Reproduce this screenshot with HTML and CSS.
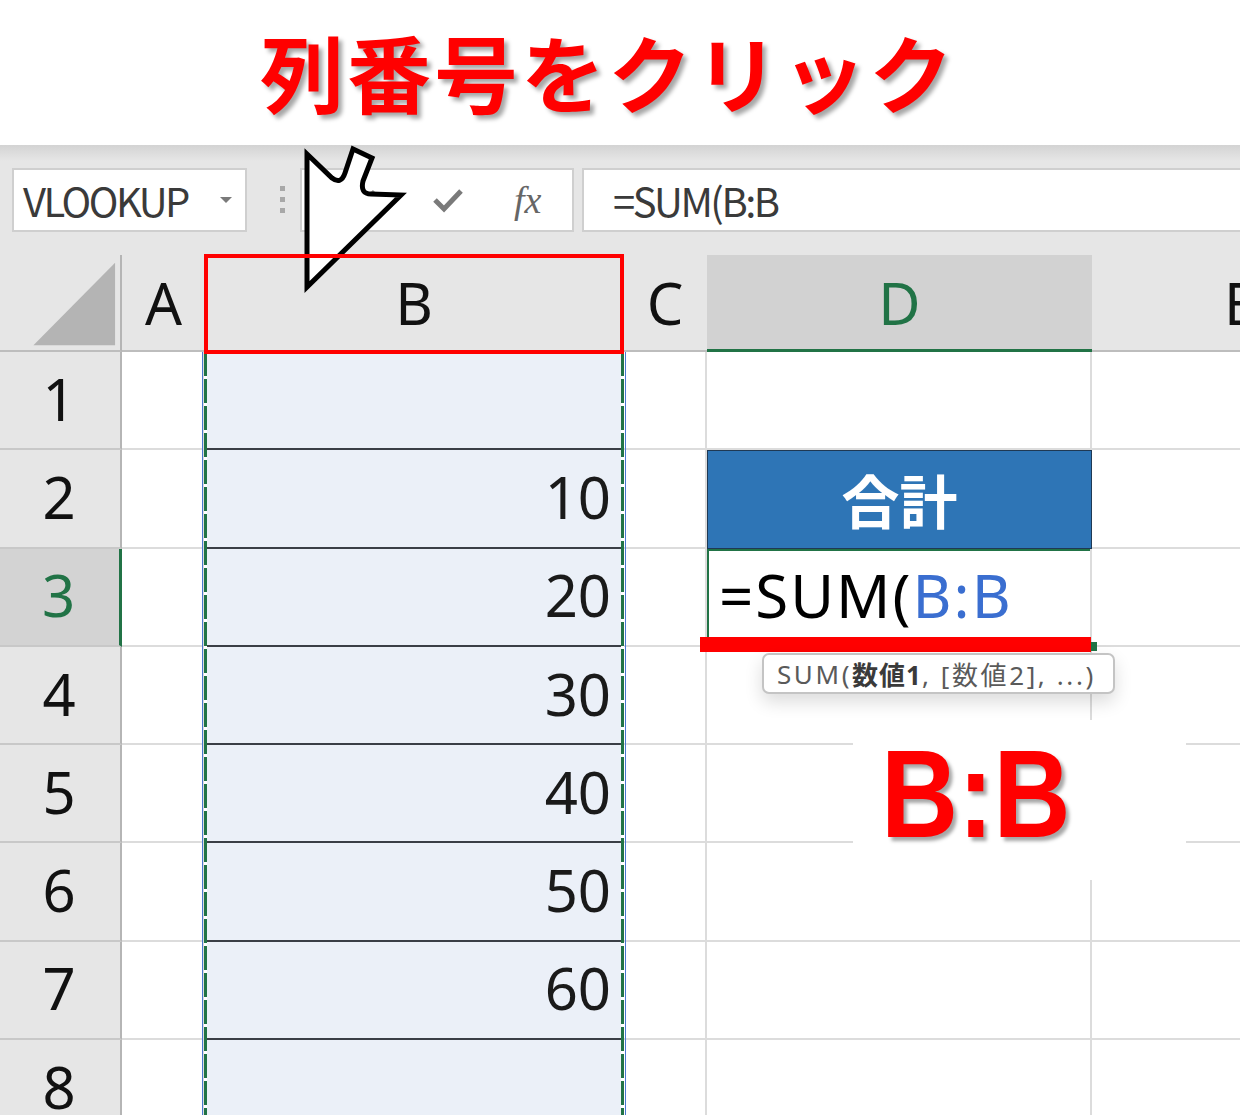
FILE: index.html
```html
<!DOCTYPE html>
<html lang="ja">
<head>
    <meta charset="UTF-8">
    <title>列番号をクリック</title>
    <link rel="stylesheet" href="styles.css">
</head>
<body>
<div class="page">
    <div class="title">列番号をクリック</div>

    <div class="toolbar">
        <div class="namebox">
            <span class="name">VLOOKUP</span>
            <span class="caret"></span>
        </div>
        <div class="grip"><i></i><i></i><i></i></div>
        <div class="fxbuttons">
            <svg class="cancel" width="26" height="26" viewBox="0 0 26 26"><path d="M4 4 L22 22 M22 4 L4 22" stroke="#8a8a8a" stroke-width="3" fill="none"/></svg>
            <svg class="check" width="32" height="26" viewBox="0 0 32 26"><path d="M3 13 L12 22 L29 4" stroke="#7a7a7a" stroke-width="5" fill="none"/></svg>
            <span class="fx">fx</span>
        </div>
        <div class="formula">=SUM(B:B</div>
    </div>

    <div class="grid">
        <div class="corner"><svg width="122" height="97" viewBox="0 0 122 97"><polygon points="34,92 117,8 117,92" fill="#b4b4b4"/></svg></div>
        <div class="ch">A</div>
        <div class="ch">B</div>
        <div class="ch">C</div>
        <div class="ch sel">D</div>
        <div class="ch">E</div>

        <div class="rh">1</div>
        <div class="c"></div>
        <div class="c b"></div>
        <div class="c"></div>
        <div class="c"></div>
        <div class="c"></div>

        <div class="rh">2</div>
        <div class="c"></div>
        <div class="c b">10</div>
        <div class="c"></div>
        <div class="c head">合計</div>
        <div class="c"></div>

        <div class="rh sel">3</div>
        <div class="c"></div>
        <div class="c b">20</div>
        <div class="c"></div>
        <div class="c active">=SUM(<span class="ref">B:B</span></div>
        <div class="c"></div>

        <div class="rh">4</div>
        <div class="c"></div>
        <div class="c b">30</div>
        <div class="c"></div>
        <div class="c"></div>
        <div class="c"></div>

        <div class="rh">5</div>
        <div class="c"></div>
        <div class="c b">40</div>
        <div class="c"></div>
        <div class="c"></div>
        <div class="c"></div>

        <div class="rh">6</div>
        <div class="c"></div>
        <div class="c b">50</div>
        <div class="c"></div>
        <div class="c"></div>
        <div class="c"></div>

        <div class="rh">7</div>
        <div class="c"></div>
        <div class="c b">60</div>
        <div class="c"></div>
        <div class="c"></div>
        <div class="c"></div>

        <div class="rh">8</div>
        <div class="c"></div>
        <div class="c b last"></div>
        <div class="c"></div>
        <div class="c"></div>
        <div class="c"></div>
    </div>

    <!-- things drawn over the sheet -->
    <div class="marquee"></div>
    <svg class="cursor" width="130" height="160" viewBox="0 0 130 160">
        <path d="M17 14 L42 38 Q51 45 55 33 L63 9 L82 18 L73 41 Q70 54 81 54 L111 55 L17 147 Z" fill="#fff" stroke="#000" stroke-width="5" stroke-linejoin="miter"/>
    </svg>
    <div class="redframe"></div>
    <div class="handle"></div>
    <div class="underline"></div>
    <div class="tooltip">SUM(<b>数値1</b>, [数値2], ...)</div>
    <div class="label"><span>B:B</span></div>
</div>
</body>
</html>
```

FILE: styles.css
```css
* {
    margin: 0;
    padding: 0;
    box-sizing: border-box;
}

body {
    width: 1240px;
    height: 1115px;
    overflow: hidden;
    background: #fff;
    font-family: 'Noto Sans', 'Noto Sans CJK JP', sans-serif;
    color: #1a1a1a;
}

.page {
    position: relative;
    width: 1240px;
    height: 1115px;
    overflow: hidden;
}

.title {
    height: 145px;
    display: flex;
    align-items: center;
    justify-content: center;
    padding-right: 24px;
    padding-bottom: 4px;
    font-family: 'Noto Sans CJK JP', sans-serif;
    font-weight: 700;
    font-size: 84px;
    letter-spacing: 3px;
    color: #ff0000;
    text-shadow: 4px 4px 4px rgba(0, 0, 0, 0.35);
}

/* formula bar */

.toolbar {
    height: 110px;
    display: flex;
    align-items: flex-start;
    padding: 23px 0 0 12px;
    background: linear-gradient(#d3d3d3, #e6e6e6 16px);
}

.namebox {
    width: 235px;
    height: 64px;
    background: #fff;
    border: 2px solid #cfcfcf;
    display: flex;
    align-items: center;
    justify-content: space-between;
    padding: 0 13px 0 9px;
}

.name,
.formula {
    font-family: 'Noto Sans CJK JP', sans-serif;
    font-size: 40px;
    letter-spacing: -2.5px;
    color: #3a3a3a;
}

.caret {
    width: 0;
    height: 0;
    border-left: 6px solid transparent;
    border-right: 6px solid transparent;
    border-top: 6px solid #7a7a7a;
}

.grip {
    display: flex;
    flex-direction: column;
    gap: 6px;
    margin: 18px 0 0 33px;
}

.grip i {
    display: block;
    width: 5px;
    height: 5px;
    background: #a8a8a8;
}

.fxbuttons {
    width: 274px;
    height: 64px;
    margin-left: 15px;
    background: #fff;
    border: 2px solid #cfcfcf;
    display: flex;
    align-items: center;
    padding-left: 50px;
}

.check {
    margin-left: 54px;
}

.fx {
    margin-left: 50px;
    font-family: 'Liberation Serif', serif;
    font-style: italic;
    font-size: 38px;
    color: #666;
}

.formula {
    flex: 1;
    height: 64px;
    margin-left: 8px;
    margin-right: -10px;
    background: #fff;
    border: 2px solid #cfcfcf;
    display: flex;
    align-items: center;
    padding-left: 29px;
}

/* sheet */

.grid {
    display: grid;
    grid-template-columns: 122px 83px 418px 84px 385px 296px;
    grid-template-rows: 97px repeat(8, 98.3px);
    width: 1388px;
}

.corner,
.ch,
.rh {
    background: #e6e6e6;
    display: flex;
    align-items: center;
    justify-content: center;
    font-size: 58px;
    color: #111;
}

.corner {
    border-right: 2px solid #b5b5b5;
    border-bottom: 2px solid #bdbdbd;
}

.ch {
    border-bottom: 2px solid #bdbdbd;
}

.ch.sel {
    background: #d2d2d2;
    color: #217346;
    border-bottom: 3px solid #217346;
}

.rh {
    border-right: 2px solid #b5b5b5;
    border-bottom: 2px solid #c8c8c8;
    padding: 0 2px 4px 0;
}

.rh.sel {
    background: #d3d3d3;
    color: #217346;
    border-right: 3px solid #217346;
}

.c {
    background: #fff;
    border-right: 2px solid #dcdcdc;
    border-bottom: 2px solid #dcdcdc;
    display: flex;
    align-items: center;
    font-size: 58px;
}

.c.b {
    background: #ebf0f8;
    justify-content: flex-end;
    padding: 0 12px 4px 0;
    border-right: none;
    border-bottom: 2px solid #3a3e46;
}

.c.b.last {
    border-bottom: none;
}

.c.head {
    background: #2e75b6;
    border: 1px solid #1f3954;
    justify-content: center;
    font-family: 'Noto Sans CJK JP', sans-serif;
    font-weight: 700;
    font-size: 58px;
    color: #fff;
}

.c.active {
    box-shadow: inset 2px 2px 0 #217346;
    padding: 0 0 4px 12px;
    font-size: 60px;
    letter-spacing: 2px;
    color: #000;
}

.ref {
    color: #3a6ed0;
}

/* overlays */

.marquee {
    position: absolute;
    left: 202px;
    top: 352px;
    width: 424px;
    height: 770px;
    border-left: 1px solid #4a78d0;
    border-right: 1px solid #4a78d0;
    background:
        repeating-linear-gradient(#217346 0 24px, #fff 24px 27px) left 1px top 0 / 3px 100% no-repeat,
        repeating-linear-gradient(#217346 0 24px, #fff 24px 27px) right 1px top 0 / 3px 100% no-repeat;
}

.cursor {
    position: absolute;
    left: 290px;
    top: 140px;
}

.redframe {
    position: absolute;
    left: 204px;
    top: 254px;
    width: 420px;
    height: 100px;
    border: 4px solid #ff0000;
}

.handle {
    position: absolute;
    left: 1089px;
    top: 642px;
    width: 8px;
    height: 9px;
    background: #217346;
}

.underline {
    position: absolute;
    left: 700px;
    top: 637px;
    width: 391px;
    height: 15px;
    background: #ff0000;
}

.tooltip {
    position: absolute;
    left: 762px;
    top: 653px;
    width: 353px;
    height: 41px;
    background: #fff;
    border: 2px solid #c4c4c4;
    border-radius: 7px;
    box-shadow: 0 8px 18px rgba(0, 0, 0, 0.14);
    padding-left: 13px;
    display: flex;
    align-items: center;
    font-size: 26px;
    letter-spacing: 2.6px;
    color: #5a5a5a;
    white-space: nowrap;
}

.tooltip b {
    color: #3a3a3a;
    letter-spacing: 1px;
}

.label {
    position: absolute;
    left: 853px;
    top: 720px;
    width: 333px;
    height: 160px;
    background: #fff;
    padding: 12px 0 0 28px;
}

.label span {
    display: inline-block;
    font-family: 'Liberation Sans', Arial, sans-serif;
    font-weight: 700;
    font-size: 124px;
    line-height: 124px;
    color: #ff0000;
    text-shadow: 4px 4px 4px rgba(0, 0, 0, 0.35);
    transform: scaleX(0.86);
    transform-origin: left top;
}
```
